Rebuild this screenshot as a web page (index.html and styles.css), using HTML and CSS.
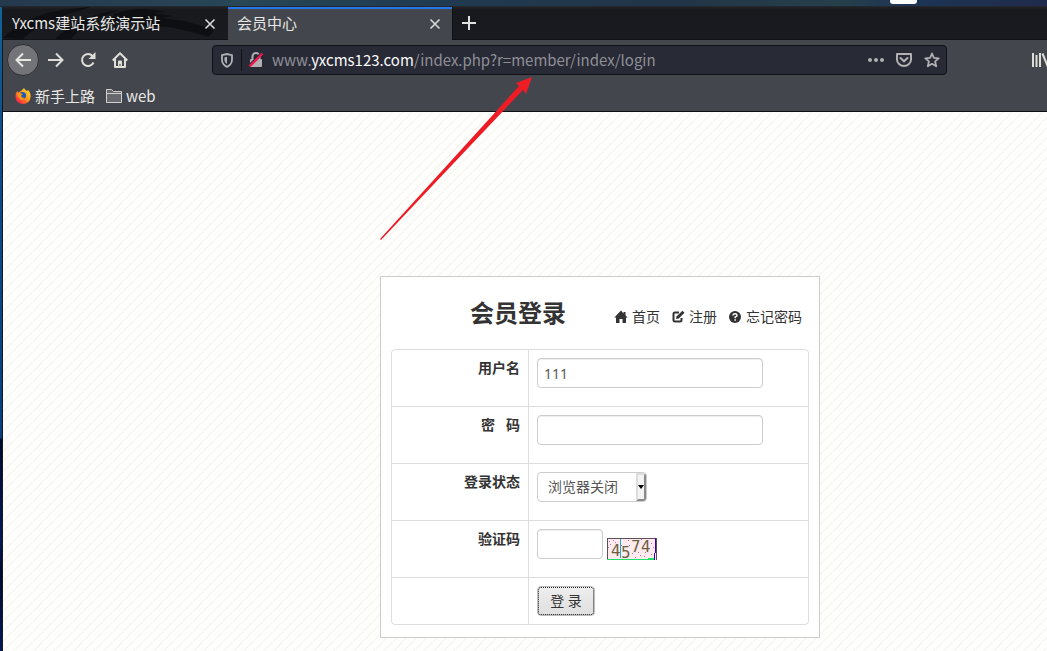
FILE: index.html
```html
<!DOCTYPE html>
<html lang="zh-CN">
<head>
<meta charset="utf-8">
<title>会员中心</title>
<link rel="stylesheet" href="styles.css">
</head>
<body>
<div class="desktop">
  <div class="panel"><span class="panel-item"></span></div>
  <div class="window">
    <header class="browser">
      <div class="tabs">
        <svg class="dragon" width="224" height="32" viewBox="0 0 224 32" aria-hidden="true">
          <path d="M0 31C22 10 48 3 77 1L88 0C58 9 36 16 20 32ZM52 32C70 15 89 7 116 3C91 12 77 21 68 32ZM111 7C126 2 143 0 162 5L150 6L170 9L159 11L182 14L201 20L211 23L206 30L185 24L166 20L143 19L118 14L105 17Z" fill="#0e0f13"/>
        </svg>
        <div class="tab">
          <span>Yxcms建站系统演示站</span>
          <button class="close" aria-label="关闭标签页"><svg width="12" height="12" viewBox="0 0 12 12"><path d="M1.5 1.5l9 9m0-9l-9 9" stroke="#d8d8d8" stroke-width="1.6"/></svg></button>
        </div>
        <div class="tab active">
          <span>会员中心</span>
          <button class="close" aria-label="关闭标签页"><svg width="12" height="12" viewBox="0 0 12 12"><path d="M1.5 1.5l9 9m0-9l-9 9" stroke="#d8d8d8" stroke-width="1.6"/></svg></button>
        </div>
        <button class="new-tab" aria-label="新建标签页"><svg width="14" height="14" viewBox="0 0 14 14"><path d="M7 0v14M0 7h14" stroke="#e2e2e2" stroke-width="2"/></svg></button>
      </div>
      <nav class="toolbar">
        <button class="tool back" aria-label="后退"><svg width="16" height="16" viewBox="0 0 16 16"><path d="M16 8H1.5M8 1.5L1.5 8L8 14.5" fill="none" stroke="#e6e6e4" stroke-width="2"/></svg></button>
        <button class="tool" aria-label="前进"><svg width="16" height="16" viewBox="0 0 16 16"><path d="M0 8h14.5M8 1.5L14.5 8L8 14.5" fill="none" stroke="#deded8" stroke-width="2"/></svg></button>
        <button class="tool" aria-label="刷新"><svg width="16" height="16" viewBox="0 0 16 16"><path d="M13.5 10.5A6 6 0 1 1 12.5 4" fill="none" stroke="#deded8" stroke-width="2"/><path d="M15.5 0v7h-7z" fill="#deded8"/></svg></button>
        <button class="tool" aria-label="主页"><svg width="16" height="16" viewBox="0 0 16 16"><path d="M.7 8.5L8 1.3l7.300 7.200M3 7v8h10V7" fill="none" stroke="#deded8" stroke-width="2" stroke-linejoin="round"/><path d="M6 15V9.500q0-1 1-1h2q1 0 1 1V15H8.500v-3h-1v3z" fill="#deded8"/></svg></button>
        <div class="address">
          <svg class="shield" width="14" height="15" viewBox="0 0 14 15"><path d="M2 2.200L7 1l5 1.200v4.300c0 3.500-2 6-5 7.300c-3-1.300-5-3.800-5-7.300z" fill="none" stroke="#b1b1b3" stroke-width="1.800"/><path d="M7 3.800v7.200c-1.800-1.200-2.600-2.700-2.600-5V4.400z" fill="#b1b1b3"/></svg>
          <span class="divider"></span>
          <svg class="lock" width="16" height="16" viewBox="0 0 16 16"><path d="M4.500 8V4.500a3.500 3.500 0 0 1 7 0V8" fill="none" stroke="#b1b1b3" stroke-width="2"/><rect x="2" y="7" width="12" height="8" rx="1" fill="#b1b1b3"/><path d="M0 14L14 0" stroke="#282a36" stroke-width="1.500"/><path d="M1.500 14.500L14.500 1.500" stroke="#f2164d" stroke-width="2.400"/></svg>
          <div class="url">www.<b>yxcms123.com</b>/index.php?r=member/index/login</div>
          <svg width="16" height="16" viewBox="0 0 16 16"><g fill="#b1b1b3"><circle cx="2" cy="8" r="2"/><circle cx="8" cy="8" r="2"/><circle cx="14" cy="8" r="2"/></g></svg>
          <svg width="16" height="16" viewBox="0 0 16 16"><path d="M1 2h14v5.500a7 6.500 0 0 1-14 0z" fill="none" stroke="#b1b1b3" stroke-width="2" stroke-linejoin="round"/><path d="M4.500 6L8 9.300L11.500 6" fill="none" stroke="#b1b1b3" stroke-width="2" stroke-linecap="round"/></svg>
          <svg width="16" height="16" viewBox="0 0 16 16"><path d="M8 1.500l1.900 4.300l4.800.5l-3.600 3.100l1.100 4.900L8 11.800l-4.200 2.500l1.100-4.900L1.300 6.300l4.800-.5z" fill="none" stroke="#b1b1b3" stroke-width="1.800" stroke-linejoin="round"/></svg>
        </div>
        <svg class="library" width="16" height="16" viewBox="0 0 16 16"><path d="M1 1v14M4.500 3v12M8 1v14M10.500 1.500L16 15" fill="none" stroke="#deded8" stroke-width="2"/></svg>
      </nav>
      <div class="bookmarks">
        <a href="#"><svg width="16" height="16" viewBox="0 0 16 16"><defs><linearGradient id="flame" x1="1" y1="0" x2="0" y2="1"><stop offset="0" stop-color="#ffe83b"/><stop offset=".45" stop-color="#ff9a18"/><stop offset=".8" stop-color="#ff3045"/><stop offset="1" stop-color="#e4167c"/></linearGradient></defs><path d="M2 3l1 1.500L6 3l3-3q1 2 3 3l1-1q3 3 2.500 7A7.500 7 0 0 1 .5 9Q0 6 2 3z" fill="url(#flame)"/><circle cx="7.500" cy="7.500" r="3.600" fill="#185bb8"/><path d="M2 5l4 .2l2 1.200l-2 1l1 2l3 .5q-2 2.500-5 1.500Q2 9 2 5z" fill="#ff941b"/></svg>新手上路</a>
        <a href="#"><svg width="16" height="16" viewBox="0 0 16 16"><path d="M.5 14.500v-13h5l2 2h8v11zM.5 5.500h15" fill="#66686d" stroke="#d0d0cc"/></svg>web</a>
      </div>
    </header>
    <main class="page">
      <section class="card">
        <div class="card-head">
          <h1>会员登录</h1>
          <a href="#"><svg width="14" height="14" viewBox="0 0 14 14"><path d="M7 .5L.3 7.500H2V13h3.500V9h3v4H12V7.500h1.700L11.500 5.300V2h-2v1.400z" fill="#333"/></svg>首页</a>
          <a href="#"><svg width="14" height="14" viewBox="0 0 14 14"><path d="M8 2.500H4Q2.500 2.500 2.500 4v6Q2.500 11.500 4 11.500h5q1.500 0 1.500-1.500V8" fill="none" stroke="#333" stroke-width="2"/><path d="M11.500.7l2 2L7.800 8.400L5 9l.7-2.700z" fill="#333"/></svg>注册</a>
          <a href="#"><svg width="14" height="14" viewBox="0 0 14 14"><circle cx="7" cy="7" r="6" fill="#333"/><path d="M5 5.500Q5 3.700 7 3.700T9 5.500Q9 6.500 7.200 7v1.200M7.200 9.200v1.600" fill="none" stroke="#fff" stroke-width="1.500"/></svg>忘记密码</a>
        </div>
        <form>
          <table class="fields">
            <tr><th><label for="user">用户名</label></th><td><input class="text" id="user" type="text" value="111"></td></tr>
            <tr><th><label for="pass">密&nbsp;&nbsp;&nbsp;码</label></th><td><input class="text" id="pass" type="password"></td></tr>
            <tr><th><label for="state">登录状态</label></th><td><span class="drop"><select id="state"><option>浏览器关闭</option></select><span class="arrow"></span></span></td></tr>
            <tr><th><label for="code">验证码</label></th><td><div class="code-row"><input class="text code" id="code" type="text">
              <svg class="captcha" width="50" height="22" viewBox="0 0 50 22" shape-rendering="crispEdges"><rect width="50" height="22" fill="#ffebee"/><path d="M2 3.500h1M6 2.500h1M8 4.500h1M3 6.500h1M1 9.500h1M14 7.500h1M21 2.500h1M22 7.500h1M34 1.500h1M44 5.500h1M46 9.500h1M31 14.500h1M33 17.500h1M37 18.500h1M38 14.500h1M44 16.500h1M28 19.500h1M6 11.500h1M25 15.500h1" stroke="#d068b0"/><g class="digits"><text x="4" y="18">4</text><text x="14" y="20">5</text><text x="24" y="14">7</text><text x="34" y="14">4</text></g><path d="M.5 22V.5h49V22" fill="none" stroke="#5c5058"/><path d="M13.500 1v19" stroke="#22a8cc"/><path d="M0 21.500h47M41 20.500h6" stroke="#22e065"/><path d="M48.500 0v15M47.500 15v7" stroke="#3300c4"/></svg></div></td></tr>
            <tr><th></th><td><button class="login" type="button">登 录</button></td></tr>
          </table>
        </form>
      </section>
    </main>
  </div>
  <svg class="pointer" width="154" height="166" viewBox="0 0 154 166" aria-hidden="true"><path d="M152 0L146 17L143 13L1 163L0 162L139 9L136 6Z" fill="#ee1c25"/></svg>
</div>
</body>
</html>
```
FILE: styles.css
```css
* { box-sizing: border-box; }
body {
  margin: 0;
  font-family: "Noto Sans", "Noto Sans CJK SC", sans-serif;
  font-size: 14px;
  line-height: 20px;
  color: #333;
}
button { padding: 0; border: 0; background: none; font: inherit; }
a { color: inherit; text-decoration: none; }
svg { display: block; flex: none; }

.desktop {
  position: relative;
  display: flex;
  flex-direction: column;
  min-height: 100vh;
  padding-left: 3px;
  overflow: hidden;
  background: linear-gradient(#12649b 0, #0c4c88 150px, #084080 438px, #010b31 439px, #021957 540px, #000b30 570px, #021858 100%);
}
.panel {
  display: flex;
  justify-content: flex-end;
  height: 7px;
  margin-left: -3px;
  padding-right: 130px;
  border-bottom: 1px solid #26272d;
  background: linear-gradient(90deg, #25394d, #274656 23%, #203a50 42%, #223548 65%, #263f4b 80%, #1d3454 88%, #202b4b);
}
.panel-item { width: 27px; height: 4px; border-radius: 0 0 3px 3px; background: #fff; }
.window { display: flex; flex: 1; flex-direction: column; border-left: 1px solid #17181c; margin-left: -1px; }

.browser {
  border-bottom: 1px solid #0f1014;
  background: #44464d;
  color: #e6e6e4;
  font-family: "Noto Sans CJK SC", sans-serif;
  font-size: 15px;
}
.tabs {
  position: relative;
  display: flex;
  height: 33px;
  background: linear-gradient(#1f2125, #18191d 3px, #1a1b20);
  border-bottom: 1px solid #101115;
}
.dragon { position: absolute; left: 0; top: 0; }
.tab {
  position: relative;
  display: flex;
  align-items: center;
  justify-content: space-between;
  width: 225px;
  height: 33px;
  padding: 0 12px 0 9px;
}
.tab span { padding-bottom: 2px; }
.active { padding-right: 11px; background: linear-gradient(#2476ed 2px, #44464d 2px); border-right: 1px solid #0f1014; }
.close { display: flex; }
.new-tab { display: flex; align-items: center; padding: 0 9px; }

.toolbar { display: flex; align-items: center; height: 40px; padding-left: 4px; }
.tool { display: flex; align-items: center; justify-content: center; width: 32px; height: 32px; }
.back { margin-right: 1px; border: 1px solid #303136; border-radius: 50%; background: #737478; }
.address {
  display: flex;
  flex: 1;
  align-items: center;
  gap: 12px;
  height: 30px;
  margin: 0 85px 0 76px;
  padding: 0 6px 0 7px;
  border: 1px solid #101116;
  border-radius: 4px;
  background: #282a36;
  color: #8f9096;
}
.divider { width: 1px; height: 22px; margin: 0 -6px 0 -5px; background: #111218; }
.url { flex: 1; margin-left: -4px; white-space: nowrap; }
.url b { font-weight: 400; color: #fafafa; }
.library { margin-right: -1px; }
.bookmarks { display: flex; align-items: center; gap: 11px; height: 31px; padding-left: 12px; }
.bookmarks a { display: flex; align-items: center; gap: 4px; }

.page {
  display: grid;
  flex: 1;
  grid-template-columns: 377fr 440px 227fr;
  align-items: start;
  padding: 164px 0 13px;
  background: linear-gradient(135deg, #fefefd 45%, #f7f6f1 45%, #f7f6f1 55%, #fefefd 55%) 0 0 / 10px 10px;
}
.card { grid-column: 2; padding: 10px 10px 12px; border: 1px solid #ccc; background: #fff; }
.card-head { display: flex; align-items: center; gap: 11px; height: 62px; padding: 0 7px 2px 79px; }
h1 { flex: 1; margin: 0 0 8px; font-size: 24px; line-height: 36px; font-weight: 700; }
.card-head a { display: flex; align-items: center; gap: 4px; }

.fields { width: 100%; border: 1px solid #ddd; border-radius: 4px; border-spacing: 0; table-layout: fixed; }
.fields th { width: 136px; padding: 8px; text-align: right; vertical-align: top; font-weight: 700; }
.fields td { height: 56px; padding: 8px; border-left: 1px solid #ddd; vertical-align: top; }
.fields tr + tr > * { border-top: 1px solid #ddd; }
.fields tr + tr td { height: 57px; }
.fields tr:last-child td { height: 47px; }
.text {
  display: block;
  width: 226px;
  height: 30px;
  padding: 4px 6px;
  border: 1px solid #ccc;
  border-radius: 4px;
  background: #fff;
  box-shadow: inset 0 1px 1px #eee;
  color: #555;
  font: inherit;
}
.code-row { display: flex; align-items: flex-end; gap: 4px; }
.code { width: 66px; }
.captcha { margin-bottom: -1px; overflow: visible; }
.digits { font-family: "DejaVu Sans", sans-serif; font-size: 15px; fill: #6b603d; }
.drop { position: relative; display: block; width: 110px; height: 30px; }
.drop select {
  width: 100%;
  height: 30px;
  padding: 0 10px;
  appearance: none;
  border: 1px solid #ccc;
  border-radius: 4px;
  background: #fff;
  color: #555;
  font: inherit;
}
.arrow {
  position: absolute;
  top: 1px;
  right: 1px;
  display: grid;
  place-items: center;
  width: 10px;
  height: 28px;
  border: 2px outset #ddd;
  border-radius: 0 3px 3px 0;
  background: #f3f3f3;
  pointer-events: none;
}
.arrow::before { content: ""; border: 3px solid transparent; border-top: 4px solid #000; border-bottom: 0; }
.login {
  display: block;
  width: 58px;
  height: 30px;
  border: 1px solid #bbb;
  border-radius: 4px;
  outline: 1px dotted #222;
  outline-offset: -2px;
  background: linear-gradient(#eee, #dfdfdf);
  color: #333;
}
.pointer { position: absolute; left: 380px; top: 77px; pointer-events: none; }
```
